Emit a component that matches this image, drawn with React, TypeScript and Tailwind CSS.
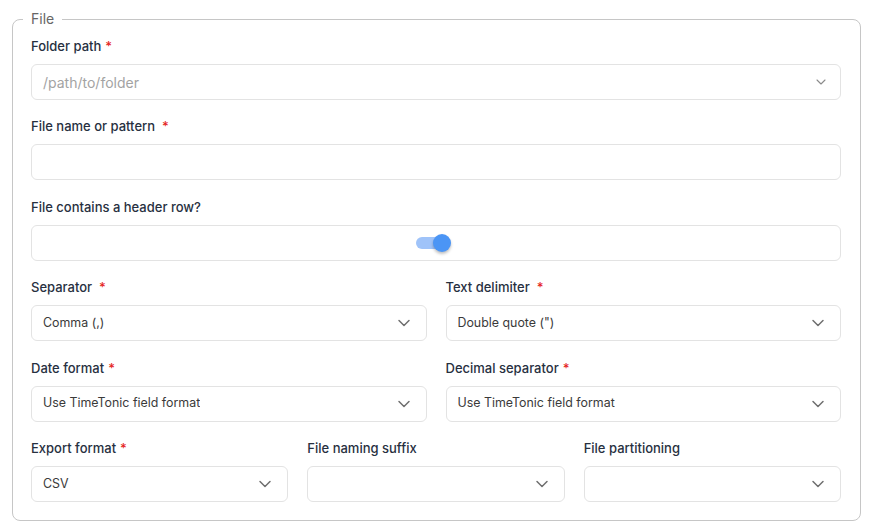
import React from 'react';
import { ChevronDown } from 'lucide-react';

type FieldProps = {
  label: string;
  required?: boolean;
  wideStar?: boolean;
  children: React.ReactNode;
};

const Field: React.FC<FieldProps> = ({ label, required, wideStar, children }) => (
  <div className="flex flex-col">
    <label className="text-[13px] leading-5 font-medium text-[#27303f] mb-2">
      {label}
      {required && (
        <span className={`text-[#e5261f] ${wideStar ? 'ml-[7px]' : 'ml-[4px]'}`}>*</span>
      )}
    </label>
    {children}
  </div>
);

const Select: React.FC<{ value?: string }> = ({ value }) => (
  <div className="relative h-9 rounded-md border border-[#e3e3e3] bg-white flex items-center pl-[11px] pr-10">
    <span className="text-[12.4px] text-[#3a3a3a] truncate">{value}</span>
    <ChevronDown size={20} strokeWidth={1.8} className="absolute right-3 top-1/2 -translate-y-1/2 text-[#6f6f6f]" />
  </div>
);

const TextInput: React.FC<{ placeholder?: string; chevron?: boolean }> = ({ placeholder, chevron }) => (
  <div className="relative h-9 rounded-md border border-[#e3e3e3] bg-white flex items-center pl-[11px] pr-10">
    {placeholder && <span className="text-[14px] text-[#a3a3a3]">{placeholder}</span>}
    {chevron && (
      <ChevronDown size={16} strokeWidth={1.6} className="absolute right-[11px] top-1/2 -translate-y-1/2 text-[#8a8a8a]" />
    )}
  </div>
);

// header-row switch, shown switched on
const Toggle: React.FC = () => (
  <div className="h-9 rounded-md border border-[#e3e3e3] bg-white flex items-center justify-center">
    <div className="relative w-8 h-3 -ml-2 rounded-full bg-[#9fc3f9]">
      <div className="absolute right-[-3px] top-1/2 -translate-y-1/2 w-[18px] h-[18px] rounded-full bg-[#4b95f5] shadow-[0_2px_3px_rgba(0,0,0,0.25)]" />
    </div>
  </div>
);

export default function App() {
  return (
    <div className="bg-white min-h-[530px] pt-[9px] pl-3" style={{ fontFamily: 'Inter, "Noto Sans", sans-serif' }}>
      <fieldset className="w-[849px] border border-[#c6c6c6] rounded-lg pl-[18px] pr-[19px] pb-[18px]">
        <legend className="-ml-2 px-2 text-[14px] leading-5 text-[#666]">File</legend>
        <div className="flex flex-col gap-[16.4px] pt-[7px]">
          <Field label="Folder path" required>
            <TextInput placeholder="/path/to/folder" chevron />
          </Field>
          <Field label="File name or pattern" required wideStar>
            <TextInput />
          </Field>
          <Field label="File contains a header row?">
            <Toggle />
          </Field>
          <div className="grid grid-cols-2 gap-x-[19px]">
            <Field label="Separator" required wideStar>
              <Select value="Comma (,)" />
            </Field>
            <Field label="Text delimiter" required wideStar>
              <Select value={'Double quote (")'} />
            </Field>
          </div>
          <div className="grid grid-cols-2 gap-x-[19px]">
            <Field label="Date format" required>
              <Select value="Use TimeTonic field format" />
            </Field>
            <Field label="Decimal separator" required>
              <Select value="Use TimeTonic field format" />
            </Field>
          </div>
          <div className="grid grid-cols-3 gap-x-[19px]">
            <Field label="Export format" required>
              <Select value="CSV" />
            </Field>
            <Field label="File naming suffix">
              <Select />
            </Field>
            <Field label="File partitioning">
              <Select />
            </Field>
          </div>
        </div>
      </fieldset>
    </div>
  );
}
